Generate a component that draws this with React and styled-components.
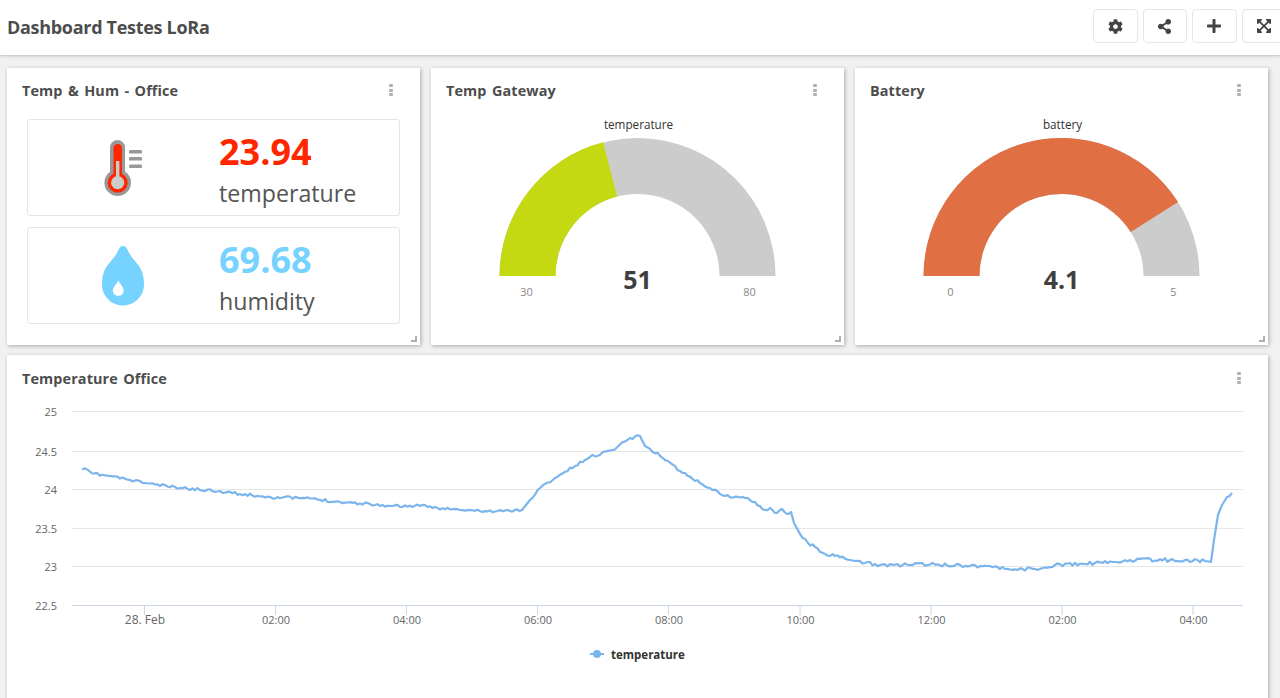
import React from "react";
import styled, { createGlobalStyle } from "styled-components";
import { FaCog, FaShareAlt, FaPlus, FaExpandArrowsAlt } from "react-icons/fa";

const Global = createGlobalStyle`
  html, body { margin: 0; height: 698px; overflow: hidden; background: #f1f1f1; }
  body { font-family: "Open Sans", "Liberation Sans", sans-serif; color: #4a4a4a; }
`;
const Page = styled.div`
  display: flex; flex-direction: column; height: 698px; overflow: hidden;
`;
const TopBar = styled.header`
  flex: none; height: 55px; display: flex; align-items: center; background: #fff;
  box-shadow: 0 1px 3px rgba(0,0,0,.22); overflow: hidden; padding-left: 7px;
`;
const PageTitle = styled.h1`
  flex: 0 0 1086px; margin: -2px 0 0; font-size: 18px; font-weight: 700; color: #4d4d4d; letter-spacing: -.3px;
`;
const Actions = styled.div`
  flex: none; display: flex; gap: 5px; margin-top: -3px;
`;
const ActionButton = styled.button`
  flex: none; width: 44.5px; height: 34px; padding: 0; display: flex; align-items: center; justify-content: center;
  background: #fff; border: 1px solid #e6e6e6; border-radius: 4px; color: #444; font-size: ${p => p.$large ? "16px" : "15px"};
`;
const Grid = styled.main`
  flex: 1; min-height: 0; display: grid; grid-template-columns: repeat(3, 413px); grid-template-rows: 277px 1fr;
  column-gap: 11px; row-gap: 10px; padding: 13px 0 0 7px; margin-bottom: -20px;
`;
const Card = styled.section`
  position: relative; background: #fff; box-shadow: 1px 1px 4px rgba(0,0,0,.3);
  grid-column: ${p => p.$wide ? "1 / -1" : "auto"};
  min-width: 0;
`;
const CardHead = styled.div`
  height: 46px; padding: ${p => p.$wide ? "2px" : "0"} 27px 0 15px; display: flex; align-items: center; justify-content: space-between; box-sizing: border-box;
`;
const CardTitle = styled.h2`
  margin: -1px 0 0; font-size: 14.4px; font-weight: 700; color: #4d4d4d; letter-spacing: .12px; word-spacing: 1.5px;
`;
const Kebab = styled.span`
  display: flex; flex-direction: column; gap: 1.5px; margin-top: -2px;
  & > i { display: block; width: 4px; height: 3px; border-radius: 1px; background: #b0b0b0; }
`;
const Handle = styled.span`
  position: absolute; right: 3px; bottom: 3px; width: 4px; height: 4px;
  border-right: 2px solid #b0b0b0; border-bottom: 2px solid #b0b0b0;
`;
const Stack = styled.div`
  display: flex; flex-direction: column; gap: 11px; padding: 5px 20px 0;
`;
const ValueCard = styled.div`
  height: 97px; box-sizing: border-box; display: grid; grid-template-columns: 190px 1fr; align-items: center;
  border: 1px solid #e4e4ea; border-radius: 3px;
`;
const IconCell = styled.div`
  display: flex; justify-content: center;
`;
const ValueText = styled.div`
  display: flex; flex-direction: column; margin-left: 1px;
`;
const Value = styled.span`
  font-size: 36px; line-height: 50px; font-weight: 700; color: ${p => p.$color};
`;
const Label = styled.span`
  font-size: 23.2px; line-height: 32px; color: #555;
`;
const Drawing = styled.svg`
  display: block;
`;
const GaugeText = styled.text`
  font-family: "Open Sans", "Liberation Sans", sans-serif;
`;

const Thermometer = () => (
  <Drawing width="38" height="56" viewBox="104 139 38 56">
    <rect x="110" y="139" width="15" height="40" rx="7.5" fill="#999" />
    <circle cx="117.7" cy="181.7" r="13.3" fill="#999" />
    <rect x="113.5" y="143" width="8.4" height="38" rx="4.2" fill="#ff2600" />
    <circle cx="117.7" cy="181.7" r="10" fill="#ff2600" />
    <rect x="116" y="160" width="3.4" height="20" fill="#ccc" />
    <circle cx="117.7" cy="181.7" r="6.6" fill="#ccc" />
    <rect x="129" y="149" width="13" height="3.6" rx="1.2" fill="#999" />
    <rect x="129" y="156" width="13" height="3.6" rx="1.2" fill="#999" />
    <rect x="129" y="163.500" width="13" height="3.6" rx="1.2" fill="#999" />
  </Drawing>
);
const Drop = () => (
  <Drawing width="42" height="60" viewBox="102 245.5 42 60">
    <path fill="#76d2ff" d="M123 245.5c2.3 0 3.6 1.6 4.4 3.5 2 5 5.2 8.7 9 13.2 3.6 4.400 7.600 9.300 7.600 21.800 0 11.600-9.400 21-21 21s-21-9.400-21-21c0-12.500 4-17.400 7.600-21.800 3.800-4.500 7-8.200 9-13.200 .8-1.900 2.100-3.500 4.400-3.500z" />
    <path fill="#fff" d="M118.300 280c1.500 3.400 5.400 6.600 5.400 9.900 0 3-2.400 5.300-5.400 5.300s-5.400-2.300-5.400-5.300c0-3.300 3.900-6.500 5.400-9.900z" />
  </Drawing>
);

const polar = (r, t) => {
  const a = Math.PI * (1 - t);
  return [r * Math.cos(a), -r * Math.sin(a)];
};
const band = (from, to, R, r) => {
  const [x1, y1] = polar(R, from), [x2, y2] = polar(R, to), [x3, y3] = polar(r, to), [x4, y4] = polar(r, from);
  return `M${x1} ${y1}A${R} ${R} 0 0 1 ${x2} ${y2}L${x3} ${y3}A${r} ${r} 0 0 0 ${x4} ${y4}Z`;
};

const Gauge = ({ name, min, max, value, color, text }) => {
  const t = (value - min) / (max - min);
  return (
    <Drawing width="413" height="231" viewBox="-206.5 -162 413 231">
      <GaugeText x="1" y="-147" fontSize="11.7" textAnchor="middle" fill="#333">{name}</GaugeText>
      <path d={band(0, 1, 138, 82)} fill="#cccccc" />
      <path d={band(0, t, 138, 82)} fill={color} />
      <GaugeText x="-111" y="20" fontSize="11" textAnchor="middle" fill="#888">{min}</GaugeText>
      <GaugeText x="112" y="20" fontSize="11" textAnchor="middle" fill="#888">{max}</GaugeText>
      <GaugeText x="0" y="13" fontSize="25" fontWeight="700" textAnchor="middle" fill="#3f3f3f">{text}</GaugeText>
    </Drawing>
  );
};

const trace = [
  [82,469.500],[88,470],[92,473.500],[110,476],[130,480],[155,484.500],[180,488],[220,491],[240,494],[270,497],[310,498.500],[340,502],[370,504],[390,506],[420,506],[460,510],[495,511.500],[522,510],
  [530,500],[540,488],[555,478],[575,466],[590,457],[612,450],[630,438],[640,436],[645,446],[650,449],[668,461],[680,471],[700,483],[710,488],[725,496],[745,498],[755,502],[765,510],[770,508],[775,513],[782,509],[787,514],[791,512],
  [794,523],[800,534],[808,543],[815,547],[825,554],[835,556],[850,560],[865,563],[880,565],[930,564.500],[990,566],[1005,569],[1040,569],[1055,565],[1085,564],[1115,562],[1130,560],[1170,560],[1205,561],[1211,562],[1214,540],[1218,515],[1222,505],[1227,497],[1232,493]
];
const buildLine = () => {
  const out = [];
  let seed = 11;
  const rnd = () => { seed = (seed * 16807) % 2147483647; return seed / 2147483647 - 0.5; };
  for (let i = 0; i < trace.length - 1; i++) {
    const [x0, y0] = trace[i], [x1, y1] = trace[i + 1];
    const steep = Math.abs((y1 - y0) / (x1 - x0)) > 1.2;
    const n = steep ? 1 : Math.max(1, Math.round((x1 - x0) / 2.5));
    for (let k = 0; k < n; k++) {
      const f = k / n;
      const noise = k === 0 || steep ? 0 : rnd() * (x0 > 860 && x0 < 1205 ? 3.6 : 2.8);
      out.push(`${(x0 + (x1 - x0) * f).toFixed(1)},${(y0 + (y1 - y0) * f + noise).toFixed(1)}`);
    }
  }
  out.push("1232,493");
  return out.join(" ");
};
const linePoints = buildLine();
const yTicks = [["25",411],["24.5",451],["24",489],["23.5",528],["23",566]];
const xTicks = [["28. Feb",144.500,true],["02:00",275.500],["04:00",406.500],["06:00",537.500],["08:00",668.500],["10:00",800],["12:00",931],["02:00",1062],["04:00",1193]];

const LineChart = () => (
  <Drawing width="1261" height="297" viewBox="7 401 1261 297">
    {yTicks.map(([l, y]) => (
      <g key={l}>
        <line x1="72" x2="1243" y1={y + .5} y2={y + .5} stroke="#e6e6e6" />
        <GaugeText x="57" y={y + 4.5} fontSize="11" textAnchor="end" fill="#666">{l}</GaugeText>
      </g>
    ))}
    <GaugeText x="57" y="609.500" fontSize="11" textAnchor="end" fill="#666">22.5</GaugeText>
    <line x1="72" x2="1243" y1="605.500" y2="605.500" stroke="#ccd6eb" />
    {xTicks.map(([l, x, big], i) => (
      <g key={i}>
        <line x1={x} x2={x} y1="605" y2="615" stroke="#ccd6eb" />
        <GaugeText x={x + .5} y="624" fontSize={big ? 12 : 11} textAnchor="middle" fill="#666">{l}</GaugeText>
      </g>
    ))}
    <polyline points={linePoints} fill="none" stroke="#7cb5ec" strokeWidth="2.2" strokeLinejoin="round" />
    <line x1="590" x2="604" y1="654" y2="654" stroke="#7cb5ec" strokeWidth="2" />
    <circle cx="597" cy="654" r="4" fill="#7cb5ec" />
    <GaugeText x="611" y="658.500" fontSize="11.500" fontWeight="700" fill="#333">temperature</GaugeText>
  </Drawing>
);

const More = () => <Kebab><i /><i /><i /></Kebab>;

export default function App() {
  return (
    <Page>
      <Global />
      <TopBar>
        <PageTitle>Dashboard Testes LoRa</PageTitle>
        <Actions>
          <ActionButton><FaCog /></ActionButton>
          <ActionButton><FaShareAlt /></ActionButton>
          <ActionButton $large><FaPlus /></ActionButton>
          <ActionButton $large><FaExpandArrowsAlt /></ActionButton>
        </Actions>
      </TopBar>
      <Grid>
        <Card>
          <CardHead><CardTitle>Temp &amp; Hum - Office</CardTitle><More /></CardHead>
          <Stack>
            <ValueCard>
              <IconCell><Thermometer /></IconCell>
              <ValueText><Value $color="#ff2600">23.94</Value><Label>temperature</Label></ValueText>
            </ValueCard>
            <ValueCard>
              <IconCell><Drop /></IconCell>
              <ValueText><Value $color="#76d2ff">69.68</Value><Label>humidity</Label></ValueText>
            </ValueCard>
          </Stack>
          <Handle />
        </Card>
        <Card>
          <CardHead><CardTitle>Temp Gateway</CardTitle><More /></CardHead>
          <Gauge name="temperature" min={30} max={80} value={51} color="#c4d912" text="51" />
          <Handle />
        </Card>
        <Card>
          <CardHead><CardTitle>Battery</CardTitle><More /></CardHead>
          <Gauge name="battery" min={0} max={5} value={4.1} color="#e07044" text="4.1" />
          <Handle />
        </Card>
        <Card $wide>
          <CardHead $wide><CardTitle>Temperature Office</CardTitle><More /></CardHead>
          <LineChart />
        </Card>
      </Grid>
    </Page>
  );
}
